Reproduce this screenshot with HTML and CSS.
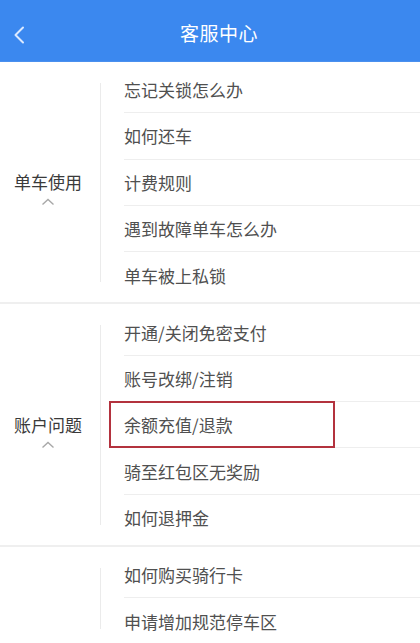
FILE: index.html
```html
<!DOCTYPE html>
<html lang="zh-CN">
<head>
<meta charset="utf-8">
<title>客服中心</title>
<link rel="stylesheet" href="styles.css">
</head>
<body>
<header class="topbar">
  <svg class="back" width="14" height="20" viewBox="0 0 14 20"><path d="M10 2.5 L2.5 10 L10 17.5" fill="none" stroke="#dbe9ff" stroke-width="2" stroke-linecap="round" stroke-linejoin="round"/></svg>
  <h1 class="title">客服中心</h1>
</header>
<main>
  <section class="group">
    <div class="label">
      <span class="label-text">单车使用</span>
      <svg class="caret" width="14" height="8" viewBox="0 0 14 8"><path d="M1.5 6.5 L7 1.5 L12.5 6.5" fill="none" stroke="#a8a8a8" stroke-width="1.4"/></svg>
    </div>
    <ul class="items">
      <li class="item">忘记关锁怎么办</li>
      <li class="item">如何还车</li>
      <li class="item">计费规则</li>
      <li class="item">遇到故障单车怎么办</li>
      <li class="item">单车被上私锁</li>
    </ul>
  </section>
  <section class="group">
    <div class="label">
      <span class="label-text">账户问题</span>
      <svg class="caret" width="14" height="8" viewBox="0 0 14 8"><path d="M1.5 6.5 L7 1.5 L12.5 6.5" fill="none" stroke="#a8a8a8" stroke-width="1.4"/></svg>
    </div>
    <ul class="items">
      <li class="item">开通/关闭免密支付</li>
      <li class="item">账号改绑/注销</li>
      <li class="item marked">余额充值/退款<span class="mark"></span></li>
      <li class="item">骑至红包区无奖励</li>
      <li class="item">如何退押金</li>
    </ul>
  </section>
  <section class="group">
    <div class="label"></div>
    <ul class="items">
      <li class="item">如何购买骑行卡</li>
      <li class="item">申请增加规范停车区</li>
    </ul>
  </section>
</main>
</body>
</html>
```

FILE: styles.css
```css
* { box-sizing: border-box; }
html, body { margin: 0; padding: 0; }
body {
  width: 420px;
  height: 643px;
  overflow: hidden;
  background: #ffffff;
  font-family: "Noto Sans CJK SC", "Noto Sans", sans-serif;
}
.topbar {
  height: 62px;
  background: #3b88ef;
  border-bottom: 1px solid #4a90ee;
  display: flex;
  align-items: center;
  justify-content: center;
  position: relative;
  padding-left: 18px;
}
.back {
  position: absolute;
  left: 13px;
  top: 25px;
}
.title {
  margin: 4px 0 0 0;
  font-size: 19px;
  font-weight: 400;
  color: #ffffff;
  letter-spacing: 0.5px;
}
.group {
  display: flex;
  padding: 5px 0 4px 0;
  border-bottom: 2px solid #efefef;
}
.label {
  width: 101px;
  flex: none;
  margin: 16px 0 16px 0;
  border-right: 1.5px solid #ebebeb;
  display: flex;
  flex-direction: column;
  align-items: center;
  justify-content: center;
  padding-right: 4px;
}
.label-text {
  font-size: 17px;
  color: #3a3a3a;
  line-height: 22px;
  margin-top: 12px;
}
.caret {
  margin-top: 5px;
}
.items {
  list-style: none;
  margin: 0 0 0 23px;
  padding: 0;
  flex: 1;
}
.item {
  height: 46.3px;
  display: flex;
  align-items: center;
  font-size: 17px;
  color: #505050;
  border-bottom: 1.5px solid #eeeeee;
  position: relative;
}
.item:last-child { border-bottom: none; }
.mark {
  position: absolute;
  left: -15px;
  top: -1px;
  width: 226px;
  height: 47px;
  border: 2px solid #b3323e;
}
```
